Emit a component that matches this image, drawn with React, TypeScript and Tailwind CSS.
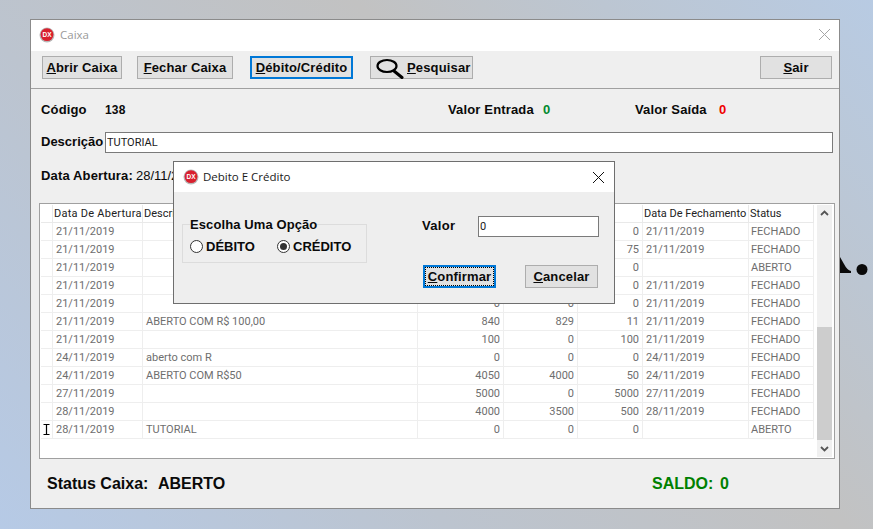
import type { ReactNode } from 'react'

const SANS = "font-['Liberation_Sans',Arial,sans-serif]"

const COLS = [
  { label: 'Data De Abertura', width: 'w-[90px]', align: 'text-left pl-[3px]', head: 'tracking-[0.25px]' },
  { label: 'Descrição', width: 'w-[275px]', align: 'text-left pl-[3px]', head: '' },
  { label: 'Valor Entrada', width: 'w-[86px]', align: 'text-right pr-[3px]', head: '' },
  { label: 'Valor Saída', width: 'w-[74px]', align: 'text-right pr-[3px]', head: '' },
  { label: 'Saldo', width: 'w-[65px]', align: 'text-right pr-[3px]', head: '' },
  { label: 'Data De Fechamento', width: 'w-[106px]', align: 'text-left pl-[3px]', head: '' },
  { label: 'Status', width: 'w-[65px]', align: 'text-left pl-[2px]', head: '' },
]

const ROWS = [
  ['21/11/2019', '', '', '', '0', '21/11/2019', 'FECHADO'],
  ['21/11/2019', '', '', '', '75', '21/11/2019', 'FECHADO'],
  ['21/11/2019', '', '', '', '0', '', 'ABERTO'],
  ['21/11/2019', '', '', '', '0', '21/11/2019', 'FECHADO'],
  ['21/11/2019', '', '0', '0', '0', '21/11/2019', 'FECHADO'],
  ['21/11/2019', 'ABERTO COM R$ 100,00', '840', '829', '11', '21/11/2019', 'FECHADO'],
  ['21/11/2019', '', '100', '0', '100', '21/11/2019', 'FECHADO'],
  ['24/11/2019', 'aberto com R', '0', '0', '0', '24/11/2019', 'FECHADO'],
  ['24/11/2019', 'ABERTO COM R$50', '4050', '4000', '50', '24/11/2019', 'FECHADO'],
  ['27/11/2019', '', '5000', '0', '5000', '27/11/2019', 'FECHADO'],
  ['28/11/2019', '', '4000', '3500', '500', '28/11/2019', 'FECHADO'],
  ['28/11/2019', 'TUTORIAL', '0', '0', '0', '', 'ABERTO'],
]

function Logo() {
  return (
    <svg width="16" height="16" viewBox="0 0 16 16" className="shrink-0">
      <circle cx="8" cy="8" r="7.5" fill="#b9b9b9" />
      <circle cx="8" cy="7.6" r="6.4" fill="#d9202e" />
      <text x="8" y="10" textAnchor="middle" fontSize="6.5" fontWeight="700" fill="#fff" fontFamily="Liberation Sans">
        DX
      </text>
    </svg>
  )
}

function Btn({ first, rest, className, children }: { first: string; rest: string; className: string; children?: ReactNode }) {
  return (
    <button
      type="button"
      className={`flex h-[23px] items-center justify-center border border-[#adadad] bg-[#e1e1e1] text-[13px] font-bold tracking-[0.15px] text-[#0a0a0a] ${className}`}
    >
      {children}
      <span><u>{first}</u>{rest}</span>
    </button>
  )
}

export default function App() {
  return (
    <div className={`relative h-[529px] w-[873px] overflow-hidden bg-[linear-gradient(47deg,#b6cae6_0%,#bcc4cf_33%,#c2c2c2_62%,#bcc6d2_80%,#b8cbe3_100%)] pl-[30px] pt-[19px] ${SANS}`}>
      {/* tail of the wallpaper lettering */}
      <svg width="34" height="24" viewBox="0 0 34 24" className="absolute left-[839px] top-[254px]">
        <path d="M1 3 L5 10 Q8 16 12 17 L12 19 L1 19 Z" fill="#0a0a0a" />
        <circle cx="23" cy="15.5" r="5.5" fill="#0a0a0a" />
      </svg>

      <div className="relative flex h-[490px] w-[810px] flex-col border border-[#8b8b8b] bg-[#efefef]">
        <div className="flex h-[31px] items-center bg-white pb-[1px] pl-[8px] pr-[8px]">
          <Logo />
          <span className="ml-[5px] font-['Open_Sans',sans-serif] text-[11.5px] text-[#9a9a9a]">Caixa</span>
          <svg width="13" height="13" viewBox="0 0 13 13" className="ml-auto mb-[2px]">
            <path d="M1 1 L12 12 M12 1 L1 12" stroke="#a5a5a5" strokeWidth="1" fill="none" />
          </svg>
        </div>

        <div className="flex h-[38px] items-start border-b border-[#a0a0a0] pl-[11px] pr-[7px] pt-[5px]">
          <Btn first="A" rest="brir Caixa" className="w-[80px]" />
          <Btn first="F" rest="echar Caixa" className="ml-[15px] w-[96px]" />
          <Btn first="D" rest="ébito/Crédito" className="ml-[17px] w-[103px] !border-2 !border-[#0078d7]" />
          <Btn first="P" rest="esquisar" className="ml-[17px] w-[103px] !justify-start pl-[4px]">
            <svg width="29" height="22" viewBox="0 0 29 22" className="mr-[3px] shrink-0">
              <ellipse cx="12" cy="9" rx="9.5" ry="6" fill="none" stroke="#000" strokeWidth="2.2" />
              <path d="M19 14 L27 20.5" stroke="#000" strokeWidth="3" strokeLinecap="round" />
            </svg>
          </Btn>
          <Btn first="S" rest="air" className="ml-auto w-[72px] tracking-[0.4px]" />
        </div>

        <div className="flex flex-1 flex-col pl-[8px] pr-[6px]">
          <div className="mt-[10px] flex h-[21px] items-center pl-[2px] text-[13px] font-bold tracking-[0.15px] text-[#0a0a0a]">
            <span className="w-[64px]">Código</span>
            <span className="w-[343px] text-[12px]">138</span>
            <span className="w-[95px]">Valor Entrada</span>
            <span className="w-[92px] text-[#008a2e]">0</span>
            <span className="w-[84px]">Valor Saída</span>
            <span className="text-[#f00000]">0</span>
          </div>

          <div className="mt-[12px] flex h-[21px] items-center pl-[2px]">
            <span className="w-[64px] pb-[2px] text-[13px] font-bold text-[#0a0a0a]">Descrição</span>
            <input
              readOnly
              value="TUTORIAL"
              className="h-[21px] w-[728px] border border-[#7a7a7a] bg-white pl-[1px] font-['Roboto',sans-serif] text-[11px] text-[#1a1a1a] outline-none"
            />
          </div>

          <div className="mt-[12px] flex h-[21px] items-center pl-[2px] text-[13px] text-[#0a0a0a]">
            <span className="font-bold tracking-[0.15px]">Data Abertura:</span>
            <span className="ml-[3px]">28/11/2019</span>
          </div>

          <div className="mt-[17px] flex h-[256px] w-[796px] border border-[#a0a0a0] bg-white pl-[1px] pt-[1px] font-['Roboto',sans-serif] text-[11px]">
            <div className="flex w-[776px] shrink-0 flex-col">
              <div className="flex h-[18px] w-[773px] border-b border-[#e9e9e9] text-[#222]">
                <div className="w-[12px] border-r border-[#e9e9e9]" />
                {COLS.map(col => (
                  <div key={col.label} className={`${col.width} ${col.head} overflow-hidden whitespace-nowrap border-r border-[#e9e9e9] pl-[1px] text-left leading-[17px]`}>
                    {col.label}
                  </div>
                ))}
              </div>
              {ROWS.map((row, i) => (
                <div key={i} className="flex h-[18px] w-[773px] border-b border-[#eeeeee] text-[#6e6e6e]">
                  <div className="flex w-[12px] items-center justify-center border-r border-[#eeeeee] text-[#000]">
                    {i === ROWS.length - 1 && (
                      <svg width="7" height="11" viewBox="0 0 7 11">
                        <path d="M0.5 0.5 H6.5 M0.5 10.5 H6.5 M3.5 0.5 V10.5" stroke="#000" strokeWidth="1.2" fill="none" />
                      </svg>
                    )}
                  </div>
                  {row.map((cell, j) => (
                    <div key={j} className={`${COLS[j].width} ${COLS[j].align} overflow-hidden whitespace-nowrap border-r border-[#eeeeee] leading-[17px]`}>
                      {cell}
                    </div>
                  ))}
                </div>
              ))}
            </div>

            <div className="mb-[1px] flex w-[15px] flex-col bg-[#f0f0f0]">
              <div className="flex h-[17px] items-center justify-center">
                <svg width="9" height="6" viewBox="0 0 9 6">
                  <path d="M1 5 L4.5 1.5 L8 5" stroke="#555" strokeWidth="1.8" fill="none" />
                </svg>
              </div>
              <div className="mt-[105px] h-[114px] bg-[#cdcdcd]" />
              <div className="mt-auto flex h-[17px] items-center justify-center">
                <svg width="9" height="6" viewBox="0 0 9 6">
                  <path d="M1 1 L4.5 4.5 L8 1" stroke="#555" strokeWidth="1.8" fill="none" />
                </svg>
              </div>
            </div>
          </div>

          <div className="flex flex-1 items-center pl-[8px] text-[16px] font-bold">
            <span className="w-[111px] text-[#0a0a0a]">Status Caixa:</span>
            <span className="w-[494px] text-[#0a0a0a]">ABERTO</span>
            <span className="w-[68px] text-[#008000]">SALDO:</span>
            <span className="text-[#008000]">0</span>
          </div>
        </div>

        {/* Debito E Crédito dialog */}
        <div className="absolute left-[142px] top-[141px] flex h-[143px] w-[442px] flex-col border border-[#6e6e6e] bg-[#eeeeee]">
          <div className="flex h-[30px] items-center bg-white pl-[9px] pr-[9px]">
            <Logo />
            <span className="ml-[4px] font-['Open_Sans',sans-serif] text-[11.5px] text-[#1a1a1a]">Debito E Crédito</span>
            <svg width="13" height="13" viewBox="0 0 13 13" className="ml-auto">
              <path d="M1 1 L12 12 M12 1 L1 12" stroke="#111" strokeWidth="1" fill="none" />
            </svg>
          </div>

          <div className="flex flex-1">
            <fieldset className="ml-[8px] mt-[24px] h-[47px] w-[185px] border border-[#dcdcdc] pl-[7px]">
              <legend className="pt-[1px] text-[13px] font-bold leading-[16px] tracking-[0.1px] text-[#0a0a0a]">Escolha Uma Opção</legend>
              <div className="mt-[4px] flex items-center text-[13px] font-bold text-[#0a0a0a]">
                <span className="h-[13px] w-[13px] rounded-full border border-[#333] bg-white" />
                <span className="ml-[3px] w-[71px]">DÉBITO</span>
                <span className="flex h-[13px] w-[13px] items-center justify-center rounded-full border border-[#333] bg-white">
                  <span className="h-[7px] w-[7px] rounded-full bg-[#333]" />
                </span>
                <span className="ml-[3px]">CRÉDITO</span>
              </div>
            </fieldset>

            <div className="ml-[55px] flex flex-col">
              <div className="mt-[24px] flex h-[21px] items-center">
                <span className="w-[56px] pb-[1px] text-[13px] font-bold tracking-[0.3px] text-[#0a0a0a]">Valor</span>
                <input
                  readOnly
                  value="0"
                  className="h-[21px] w-[121px] border border-[#7a7a7a] bg-white pl-[1px] font-['Roboto',sans-serif] text-[11px] text-[#1a1a1a] outline-none"
                />
              </div>
              <div className="mt-[28px] flex">
                <button
                  type="button"
                  className="ml-[1px] flex h-[23px] w-[73px] items-center justify-center border-2 border-[#0078d7] bg-[#e1e1e1] pt-[1px] text-[13px] font-bold tracking-[0.15px] text-[#0a0a0a] outline-1 -outline-offset-3 outline-dotted outline-black"
                >
                  <span><u>C</u>onfirmar</span>
                </button>
                <Btn first="C" rest="ancelar" className="ml-[29px] w-[73px] pt-[1px]" />
              </div>
            </div>
          </div>
        </div>
      </div>
    </div>
  )
}
